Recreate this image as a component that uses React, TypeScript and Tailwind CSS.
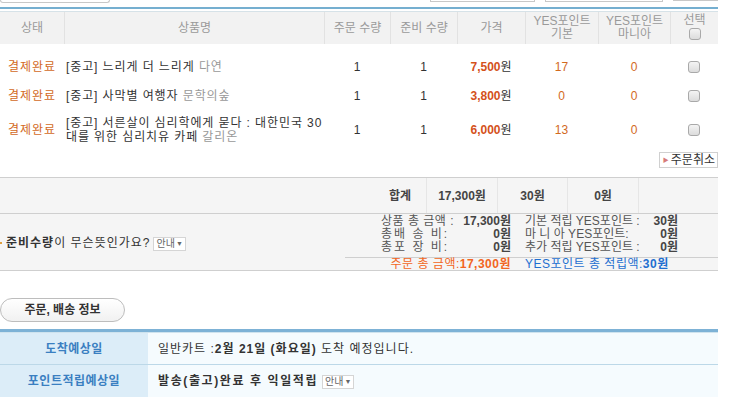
const rows = [
  { title: ['[중고] 느리게 더 느리게'], pub: '다연', price: '7,500', base: 17, mania: 0 },
  { title: ['[중고] 사막별 여행자'], pub: '문학의숲', price: '3,800', base: 0, mania: 0 },
  {
    title: ['[중고] 서른살이 심리학에게 묻다 : 대한민국 30', '대를 위한 심리치유 카페'],
    pub: '갈리온',
    price: '6,000',
    base: 13,
    mania: 0,
  },
];

const cols = 'grid grid-cols-[64px_260px_66px_67px_68px_73px_72px_48px]';

function Check() {
  return (
    <span className="inline-block w-[12px] h-[12px] rounded-[3px] border border-[#a9a9a9] bg-gradient-to-b from-[#f4f4f4] to-[#dcdcdc]" />
  );
}

function Guide() {
  return (
    <span className="inline-flex items-center h-[14px] px-[2px] border border-[#d5d5d5] bg-white text-[10px] leading-none tracking-normal text-[#666] font-normal align-middle">
      안내
      <span className="ml-[1px] text-[7px]">▼</span>
    </span>
  );
}

export default function App() {
  return (
    <div className="w-[734px] h-[397px] overflow-hidden bg-white font-['Liberation_Sans','Noto_Sans_CJK_KR',sans-serif] text-[12px] text-[#333]">
      <div className="w-[718px]">
        {/* tail of the controls above */}
        <div className="flex h-[4px]">
          <div className="w-[110px] h-[3px] border-x border-b border-[#c8c8c8] rounded-b-[8px]" />
          <div className="ml-[320px] w-[105px] h-[2px] border-x border-b border-[#c8c8c8]" />
          <div className="ml-[10px] w-[118px] h-[2px] border-x border-b border-[#c8c8c8]" />
          <div className="ml-[10px] w-[45px] h-[1px] border-x border-b border-[#c8c8c8]" />
        </div>

        <div className="mt-[3px] h-[2px] bg-[#75afd0]" />
        <div className="mt-[2px] h-px bg-[#d6e2e8]" />

        {/* header */}
        <div className={`${cols} h-[32px] bg-[#f2f2f2] text-[#9a9a9a] leading-[13px]`}>
          <div className="flex items-center justify-center">상태</div>
          <div className="flex items-center justify-center border-l border-[#e2e2e2]">상품명</div>
          <div className="flex items-center justify-center border-l border-[#e2e2e2]">주문 수량</div>
          <div className="flex items-center justify-center border-l border-[#e2e2e2]">준비 수량</div>
          <div className="flex items-center justify-center border-l border-[#e2e2e2]">가격</div>
          <div className="flex flex-col items-center justify-center border-l border-[#e2e2e2]">
            <span>YES포인트</span>
            <span>기본</span>
          </div>
          <div className="flex flex-col items-center justify-center border-l border-[#e2e2e2]">
            <span>YES포인트</span>
            <span>마니아</span>
          </div>
          <div className="flex flex-col items-center justify-center border-l border-[#e2e2e2] gap-[1px] pb-[2px]">
            <span>선택</span>
            <Check />
          </div>
        </div>

        {/* items */}
        <div className="pt-[8px]">
          {rows.map((r, i) => (
            <div key={i} className={`${cols} ${r.title.length > 1 ? 'h-[40px]' : 'h-[29px]'} items-center`}>
              <div className="text-center text-[#d2691e] tracking-[1px]">결제완료</div>
              <div className="pl-[2px] leading-[14px] tracking-[0.9px] whitespace-nowrap">
                {r.title.map((t, j) => (
                  <div key={j}>
                    {t}
                    {j === r.title.length - 1 && <span className="text-[#999]"> {r.pub}</span>}
                  </div>
                ))}
              </div>
              <div className="text-center">1</div>
              <div className="text-center">1</div>
              <div className="text-center">
                <b className="text-[#d4511b]">{r.price}</b>원
              </div>
              <div className="text-center text-[#d2691e]">{r.base}</div>
              <div className="text-center text-[#d2691e]">{r.mania}</div>
              <div className="flex justify-center">
                <Check />
              </div>
            </div>
          ))}
        </div>

        <div className="flex justify-end mt-[2px]">
          <button className="flex items-center h-[16px] pl-[3px] pr-[2px] border border-[#d0d0d0] bg-white text-[12px] leading-none text-[#333] whitespace-nowrap">
            <span className="mr-[2px] text-[6px] text-[#d77a7a]">▶</span>
            주문취소
          </button>
        </div>

        {/* totals */}
        <div className="mt-[9px] border-t border-[#cfcfcf] bg-[#f5f5f5]">
          <div className="flex h-[35px] font-bold text-[#444]">
            <div className="flex-1" />
            <div className="w-[52px] flex items-center justify-center">합계</div>
            <div className="w-[71px] flex items-center justify-center border-l border-[#e6e6e6]">17,300원</div>
            <div className="w-[70px] flex items-center justify-center border-l border-[#e6e6e6]">30원</div>
            <div className="w-[71px] flex items-center justify-center border-l border-[#e6e6e6]">0원</div>
            <div className="w-[80px] border-l border-[#e6e6e6]" />
          </div>
          <div className="flex h-[58px] border-t border-b border-[#cfcfcf]">
            <div className="flex-1 flex items-center pt-[2px] tracking-[1px]">
              <span className="w-[2px] h-[2px] bg-[#e0a040] mr-[4px]" />
              <b className="text-[#333]">준비수량</b>
              <span>이 무슨뜻인가요?</span>
              <span className="ml-[3px]">
                <Guide />
              </span>
            </div>
            <div className="w-[373px] flex flex-col leading-[13px] text-[#555]">
              <div className="flex pl-[36px] pt-[1px] gap-[14px]">
                <div className="w-[130px]">
                  <div className="flex justify-between">
                    <span className="tracking-[0.5px]">상품 총 금액 :</span>
                    <b className="text-[#444]">17,300원</b>
                  </div>
                  <div className="flex justify-between">
                    <span className="tracking-[2px]">총배 송 비:</span>
                    <b className="text-[#444]">0원</b>
                  </div>
                  <div className="flex justify-between">
                    <span className="tracking-[2px]">총포 장 비:</span>
                    <b className="text-[#444]">0원</b>
                  </div>
                </div>
                <div className="w-[153px]">
                  <div className="flex justify-between">
                    <span>기본 적립 YES포인트 :</span>
                    <b className="text-[#444]">30원</b>
                  </div>
                  <div className="flex justify-between">
                    <span>마 니 아 YES포인트:</span>
                    <b className="text-[#444]">0원</b>
                  </div>
                  <div className="flex justify-between">
                    <span>추가 적립 YES포인트 :</span>
                    <b className="text-[#444]">0원</b>
                  </div>
                </div>
              </div>
              <div className="mt-[3px] border-t border-[#cfcfcf] flex items-center h-[15px]">
                <div className="w-[166px] text-right text-[#f26522] tracking-[0.5px]">
                  주문 총 금액:<b>17,300원</b>
                </div>
                <div className="ml-[14px] text-[#1f6fd0] tracking-[0.5px]">
                  YES포인트 총 적립액:<b>30원</b>
                </div>
              </div>
            </div>
          </div>
        </div>

        {/* order / delivery info */}
        <div className="mt-[27px]">
          <div className="w-[125px] h-[24px] flex items-center justify-center rounded-full border border-[#bdbdbd] bg-gradient-to-b from-white to-[#f1f1f1] font-bold text-[#333]">
            주문, 배송 정보
          </div>
        </div>

        <div className="mt-[7px] h-[3px] bg-[#7db2d6]" />
        <div className="h-px bg-[#cfe3ee]" />
        <div className="flex h-[32px] border-b border-[#bcd8e8]">
          <div className="w-[148px] flex items-center justify-center bg-[#dcedf8] font-bold text-[#3a7fc1] tracking-[0.5px]">
            도착예상일
          </div>
          <div className="flex-1 flex items-center pl-[10px] bg-[#f5fbfe] tracking-[1px] whitespace-pre">
            일반카트 :<b>2월 21일 (화요일)</b> 도착 예정입니다.
          </div>
        </div>
        <div className="flex h-[32px]">
          <div className="w-[148px] flex items-center justify-center bg-[#dcedf8] font-bold text-[#3a7fc1] tracking-[0.5px]">
            포인트적립예상일
          </div>
          <div className="flex-1 flex items-center pl-[10px] bg-[#f5fbfe]">
            <b className="tracking-[1.6px]">발송(출고)완료 후 익일적립</b>
            <span className="ml-[4px]">
              <Guide />
            </span>
          </div>
        </div>
      </div>
    </div>
  );
}
